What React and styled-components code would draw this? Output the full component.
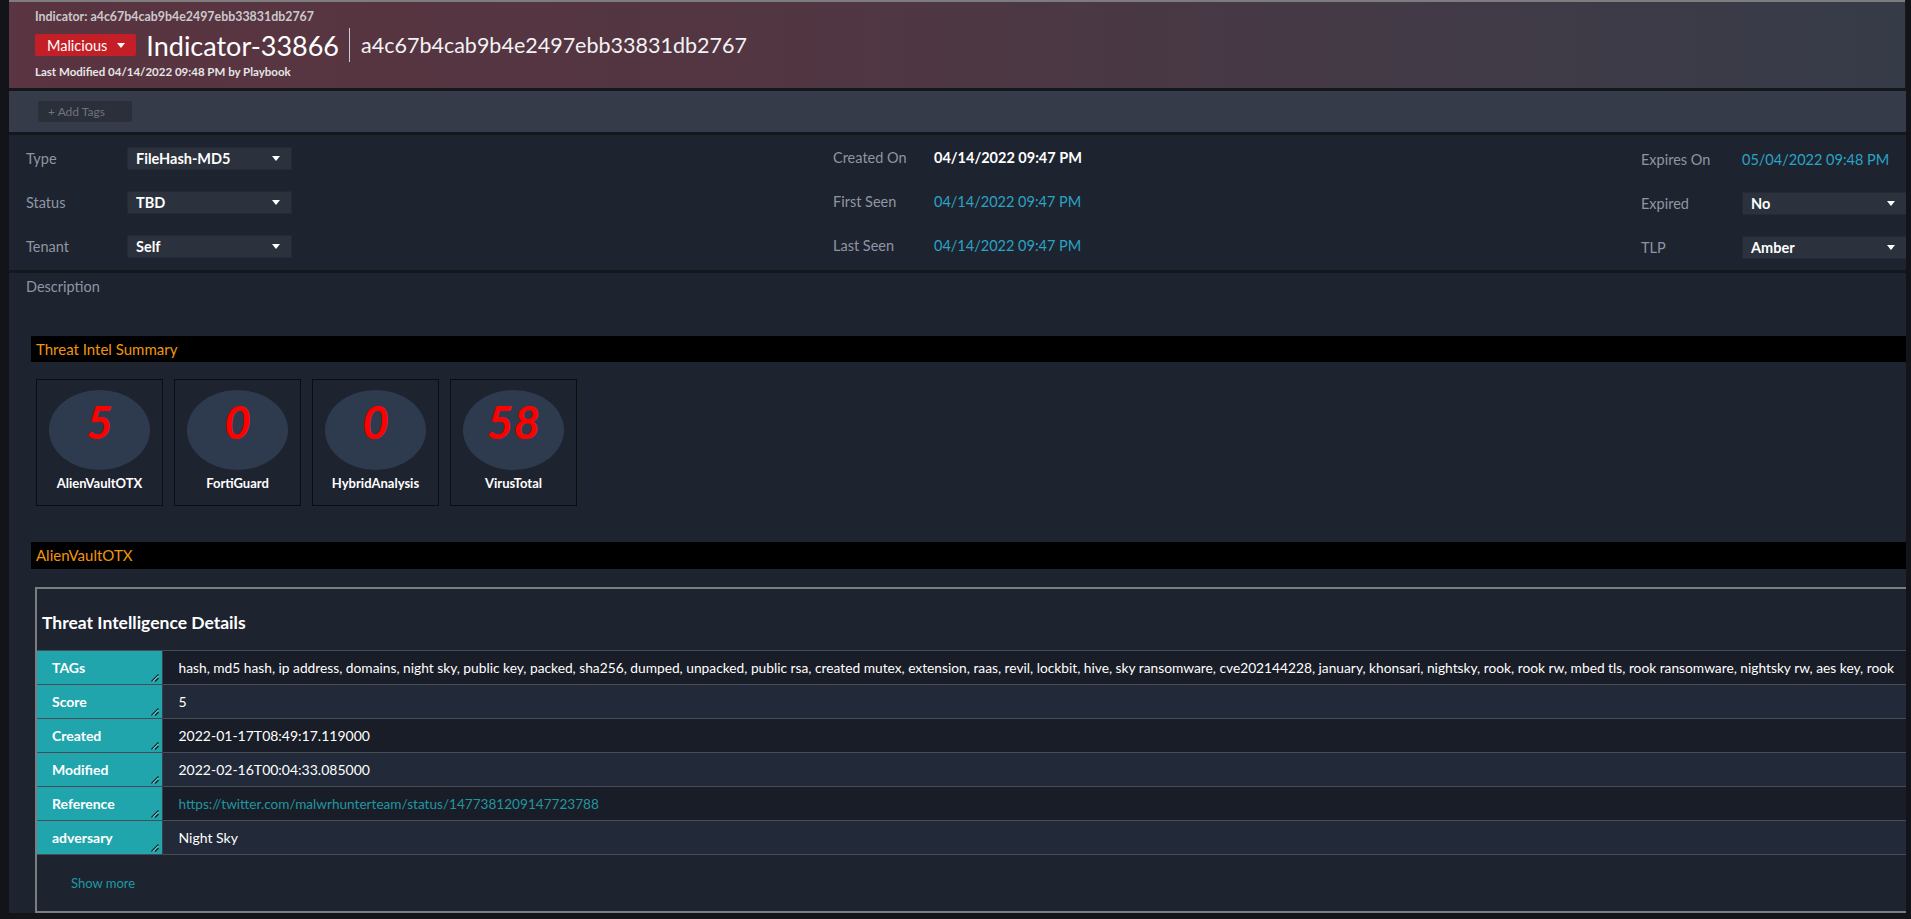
import React from 'react';
import styled, { createGlobalStyle } from 'styled-components';

const GlobalStyle = createGlobalStyle`
  * { box-sizing: border-box; }
  html, body { margin: 0; padding: 0; background: #121419; }
  body { font-family: Lato, "Noto Sans", sans-serif; color: #ffffff; }
`;

const Page = styled.div`
  margin-left: 9px;
  width: 1897px;
  display: flex;
  flex-direction: column;
  gap: 3px;
  background: #14171c;
  overflow: hidden;
`;

const Header = styled.header`
  height: 88px;
  border-top: 2px solid #7d7d80;
  background: linear-gradient(90deg, #5a3440 0%, #523642 40%, #443a46 70%, #363b48 100%);
  box-shadow: -2px 0 0 #d0262c;
  padding: 8px 0 0 26px;
  margin-right: 1px;
`;

const Crumb = styled.div`
  font-size: 12.4px;
  font-weight: 700;
  line-height: 14px;
  color: #c9c9ce;
`;

const TitleRow = styled.div`
  display: flex;
  align-items: center;
  height: 34px;
  margin-top: 4px;
`;

const StatusBadge = styled.div`
  display: flex;
  align-items: center;
  gap: 10px;
  height: 22px;
  padding: 0 11px 0 12px;
  background: #c41f26;
  border-radius: 2px;
  font-size: 14.5px;
  color: #fff;
`;

const Caret = styled.span`
  width: 0;
  height: 0;
  border-left: 4px solid transparent;
  border-right: 4px solid transparent;
  border-top: 5px solid ${(p) => p.$color || '#fff'};
`;

const Title = styled.h1`
  margin: 0 10px;
  font-size: 27px;
  font-weight: 400;
  color: #fff;
`;

const Divider = styled.span`
  width: 1px;
  height: 34px;
  background: #c8ccd6;
`;

const Hash = styled.span`
  margin-left: 11px;
  font-size: 21.5px;
  color: #f2f2f4;
`;

const Modified = styled.div`
  margin-top: 3px;
  font-size: 11.5px;
  font-weight: 700;
  line-height: 14px;
  color: #e6e6e8;
`;

const TagBar = styled.div`
  height: 41px;
  background: #353b48;
  padding: 9px 0 0 29px;
`;

const AddTags = styled.button`
  width: 94px;
  height: 21px;
  border: none;
  border-radius: 2px;
  background: #2a2f39;
  color: #6e747e;
  font-family: inherit;
  font-size: 12px;
  text-align: left;
  padding: 0 10px;
`;

const Fields = styled.section`
  height: 135px;
  background: #1e2330;
  display: grid;
  grid-template-columns: 807px 808px 1fr;
`;

const FieldCol = styled.div`
  display: flex;
  flex-direction: column;
  gap: 21px;
  padding: ${(p) => p.$top}px 0 0 ${(p) => p.$left}px;
`;

const FieldRow = styled.div`
  display: grid;
  grid-template-columns: 101px auto;
  align-items: center;
  height: 23px;
`;

const Label = styled.span`
  font-size: 14.5px;
  color: #8f96a3;
`;

const Value = styled.span`
  font-size: 14.5px;
  font-weight: ${(p) => (p.$strong ? 700 : 400)};
  color: ${(p) => (p.$link ? '#2aa4c4' : '#ffffff')};
`;

const Select = styled.div`
  display: flex;
  align-items: center;
  justify-content: space-between;
  width: 165px;
  height: 23px;
  padding: 0 11px 0 8px;
  background: #2b313d;
  border: 1px solid #242935;
  font-size: 14.5px;
  font-weight: 700;
  color: #fff;
`;

const Body = styled.section`
  background: #1e2330;
  padding: 6px 0 0 0;
`;

const DescLabel = styled.div`
  padding-left: 17px;
  font-size: 14.5px;
  line-height: 16px;
  color: #8f96a3;
`;

const Widgets = styled.div`
  margin-top: 41px;
  padding-left: 22px;
`;

const SectionBar = styled.div`
  height: ${(p) => p.$h}px;
  line-height: ${(p) => p.$h}px;
  background: #000;
  color: #f0960e;
  font-size: 15px;
  padding-left: 5px;
  margin-top: ${(p) => p.$mt || 0}px;
`;

const Cards = styled.div`
  display: flex;
  gap: 11px;
  margin-top: 17px;
  padding-left: 5px;
`;

const Card = styled.div`
  width: 127px;
  height: 127px;
  border: 1px solid #0b0d11;
  background: #1e2330;
  padding-top: 10px;
  display: flex;
  flex-direction: column;
  align-items: center;
`;

const Bubble = styled.div`
  width: 101px;
  height: 80px;
  border-radius: 50%;
  background: #2e3b4e;
  display: flex;
  align-items: center;
  justify-content: center;
  padding-bottom: 17px;
`;

const Count = styled.span`
  font-size: 46px;
  line-height: 46px;
  font-weight: 700;
  font-style: italic;
  color: #ff0000;
`;

const CardLabel = styled.div`
  margin-top: 5px;
  font-size: 13px;
  line-height: 16px;
  font-weight: 700;
  color: #fff;
`;

const DetailBox = styled.div`
  margin: 18px -6px 0 4px;
  border: 2px solid #7b7d80;
`;

const DetailTitle = styled.h2`
  margin: 0;
  padding: 24px 5px 0;
  font-size: 17.5px;
  line-height: 20px;
  font-weight: 700;
  color: #fff;
`;

const Table = styled.table`
  margin-top: 17px;
  width: 100%;
  border-collapse: collapse;
  table-layout: fixed;
`;

const Row = styled.tr`
  height: 34px;
  background: ${(p) => (p.$alt ? '#222a3a' : '#191d27')};
  border-top: 1px solid #474c57;
  border-bottom: 1px solid #474c57;
`;

const KeyCell = styled.th`
  position: relative;
  width: 125px;
  padding: 0 0 0 15px;
  background: #21a5ad;
  border-right: 1px solid #3a3f4a;
  text-align: left;
  font-size: 14px;
  font-weight: 700;
  color: #fff;
`;

const Grip = styled.svg`
  position: absolute;
  right: 3px;
  bottom: 2px;
`;

const ValCell = styled.td`
  padding: 0 0 0 16px;
  font-size: 14px;
  color: ${(p) => (p.$link ? '#2196a0' : '#fff')};
  white-space: nowrap;
  overflow: hidden;
`;

const CellText = styled.span`
  font-size: ${(p) => p.$size}px;
`;

const ShowMore = styled.div`
  padding: 20px 0 20px 34px;
  font-size: 13px;
  line-height: 16px;
  color: #1f9aa3;
`;

const leftFields = [
  ['Type', 'FileHash-MD5'],
  ['Status', 'TBD'],
  ['Tenant', 'Self'],
];

const counts = [
  ['5', 'AlienVaultOTX'],
  ['0', 'FortiGuard'],
  ['0', 'HybridAnalysis'],
  ['58', 'VirusTotal'],
];

const tags =
  'hash, md5 hash, ip address, domains, night sky, public key, packed, sha256, dumped, unpacked, public rsa, created mutex, extension, raas, revil, lockbit, hive, sky ransomware, cve202144228, january, khonsari, nightsky, rook, rook rw, mbed tls, rook ransomware, nightsky rw, aes key, rook';

const details = [
  ['TAGs', tags, false, 13.75],
  ['Score', '5'],
  ['Created', '2022-01-17T08:49:17.119000'],
  ['Modified', '2022-02-16T00:04:33.085000'],
  ['Reference', 'https://twitter.com/malwrhunterteam/status/1477381209147723788', true, 13.6],
  ['adversary', 'Night Sky'],
];

const GripIcon = () => (
  <Grip width="9" height="9" viewBox="0 0 9 9">
    <path d="M8.5 1.5 L1.5 8.5" stroke="#10262a" strokeWidth="1.4" />
    <path d="M8.5 5 L5 8.5" stroke="#10262a" strokeWidth="1.4" />
    <path d="M8.5 2.8 L2.8 8.5" stroke="#d8f2f2" strokeWidth="0.8" />
  </Grip>
);

export default function App() {
  return (
    <>
      <GlobalStyle />
      <Page>
        <Header>
          <Crumb>Indicator: a4c67b4cab9b4e2497ebb33831db2767</Crumb>
          <TitleRow>
            <StatusBadge>
              Malicious <Caret />
            </StatusBadge>
            <Title>Indicator-33866</Title>
            <Divider />
            <Hash>a4c67b4cab9b4e2497ebb33831db2767</Hash>
          </TitleRow>
          <Modified>Last Modified 04/14/2022 09:48 PM by Playbook</Modified>
        </Header>

        <TagBar>
          <AddTags>+ Add Tags</AddTags>
        </TagBar>

        <Fields>
          <FieldCol $top={12} $left={17}>
            {leftFields.map(([l, v]) => (
              <FieldRow key={l}>
                <Label>{l}</Label>
                <Select>
                  {v}
                  <Caret />
                </Select>
              </FieldRow>
            ))}
          </FieldCol>
          <FieldCol $top={11} $left={17}>
            <FieldRow>
              <Label>Created On</Label>
              <Value $strong>04/14/2022 09:47 PM</Value>
            </FieldRow>
            <FieldRow>
              <Label>First Seen</Label>
              <Value $link>04/14/2022 09:47 PM</Value>
            </FieldRow>
            <FieldRow>
              <Label>Last Seen</Label>
              <Value $link>04/14/2022 09:47 PM</Value>
            </FieldRow>
          </FieldCol>
          <FieldCol $top={13} $left={17}>
            <FieldRow>
              <Label>Expires On</Label>
              <Value $link>05/04/2022 09:48 PM</Value>
            </FieldRow>
            <FieldRow>
              <Label>Expired</Label>
              <Select>
                No
                <Caret />
              </Select>
            </FieldRow>
            <FieldRow>
              <Label>TLP</Label>
              <Select>
                Amber
                <Caret />
              </Select>
            </FieldRow>
          </FieldCol>
        </Fields>

        <Body>
          <DescLabel>Description</DescLabel>
          <Widgets>
            <SectionBar $h={26}>Threat Intel Summary</SectionBar>
            <Cards>
              {counts.map(([n, l]) => (
                <Card key={l}>
                  <Bubble>
                    <Count>{n}</Count>
                  </Bubble>
                  <CardLabel>{l}</CardLabel>
                </Card>
              ))}
            </Cards>
            <SectionBar $h={27} $mt={36}>
              AlienVaultOTX
            </SectionBar>
            <DetailBox>
              <DetailTitle>Threat Intelligence Details</DetailTitle>
              <Table>
                <tbody>
                  {details.map(([k, v, link, size], i) => (
                    <Row key={k} $alt={i % 2 === 1}>
                      <KeyCell>
                        {k}
                        <GripIcon />
                      </KeyCell>
                      <ValCell $link={link}>
                        {size ? <CellText $size={size}>{v}</CellText> : v}
                      </ValCell>
                    </Row>
                  ))}
                </tbody>
              </Table>
              <ShowMore>Show more</ShowMore>
            </DetailBox>
          </Widgets>
        </Body>
      </Page>
    </>
  );
}
